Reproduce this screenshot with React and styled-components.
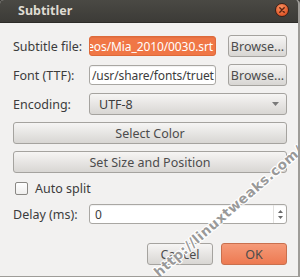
import React from 'react'
import styled, { createGlobalStyle } from 'styled-components';

const GlobalStyle = createGlobalStyle`
html, body {
    margin: 0;
    padding: 0;
    background: #3c3b37;
}
body {
    font-family: "Noto Sans", "DejaVu Sans", sans-serif;
    font-size: 12.5px;
    color: #3c3c3c;
}
`;

function App() {
    return (
        <>
            <GlobalStyle />
            <Window>
                <TitleBar>
                    <Title>Subtitler</Title>
                    <CloseButton>
                        <svg width="6" height="6" viewBox="0 0 6 6">
                            <path d="M0.8 0.8 L5.2 5.2 M5.2 0.8 L0.8 5.2" stroke="#5a2312" strokeWidth="1.4" strokeLinecap="round"/>
                        </svg>
                    </CloseButton>
                </TitleBar>
                <Body>
                    <Row>
                        <Label>Subtitle file:</Label>
                        <TextField selected>eos/Mia_2010/0030.srt</TextField>
                        <Button width="59px">Browse...</Button>
                    </Row>
                    <Row>
                        <Label>Font (TTF):</Label>
                        <TextField>/usr/share/fonts/truet</TextField>
                        <Button width="59px">Browse...</Button>
                    </Row>
                    <Row>
                        <Label>Encoding:</Label>
                        <Combo>
                            <span>UTF-8</span>
                            <svg width="7" height="4" viewBox="0 0 7 4">
                                <path d="M0 0 L7 0 L3.5 4 Z" fill="#7a7a7a"/>
                            </svg>
                        </Combo>
                    </Row>
                    <WideButton>Select Color</WideButton>
                    <WideButton>Set Size and Position</WideButton>
                    <CheckRow>
                        <CheckBox />
                        <span>Auto split</span>
                    </CheckRow>
                    <Row>
                        <Label>Delay (ms):</Label>
                        <SpinField>
                            <SpinText>0</SpinText>
                            <SpinArrows>
                                <svg width="5" height="3" viewBox="0 0 5 3">
                                    <path d="M0 3 L5 3 L2.5 0 Z" fill="#6a6a6a"/>
                                </svg>
                                <svg width="5" height="3" viewBox="0 0 5 3">
                                    <path d="M0 0 L5 0 L2.5 3 Z" fill="#6a6a6a"/>
                                </svg>
                            </SpinArrows>
                        </SpinField>
                    </Row>
                    <ButtonBar>
                        <Button width="66px">Cancel</Button>
                        <Button width="66px" primary>OK</Button>
                    </ButtonBar>
                </Body>
                <Watermark>
                    <span>http://linuxtweaks.com/</span>
                </Watermark>
            </Window>
        </>
    )
}

export default App


const Window = styled.div`
position: relative;
width: 300px;
height: 277px;
box-sizing: border-box;
display: flex;
flex-direction: column;
overflow: hidden;
background: #f2f1f0;
border-right: 2px solid #9e9c98;
border-bottom: 1px solid #9e9c98;
border-radius: 4px 4px 0 0;
`;

const TitleBar = styled.div`
height: 23px;
flex-shrink: 0;
display: flex;
align-items: center;
justify-content: space-between;
padding: 0 9px 0 18px;
background: linear-gradient(#4a4944, #3c3b37);
border-bottom: 1px solid #2c2b28;
box-sizing: border-box;
`;

const Title = styled.div`
font-weight: bold;
font-size: 12.5px;
color: #dfdbd2;
margin-top: -1px;
`;

const CloseButton = styled.div`
width: 12px;
height: 12px;
margin-top: -2px;
border-radius: 50%;
background: radial-gradient(circle at 40% 30%, #f7905f, #e0582a 70%, #c4461f);
border: 1px solid #3a2018;
display: flex;
align-items: center;
justify-content: center;
`;

const Body = styled.div`
display: flex;
flex-direction: column;
gap: 7px;
padding: 12px 11px 0 13px;
`;

const Row = styled.div`
height: 22px;
display: flex;
align-items: center;
`;

const Label = styled.div`
width: 76px;
flex-shrink: 0;
white-space: nowrap;
`;

const TextField = styled.div`
width: 127px;
height: 20px;
box-sizing: border-box;
margin-right: 12px;
padding: 0 2px;
display: flex;
align-items: center;
justify-content: ${p => p.selected ? 'flex-end' : 'flex-start'};
white-space: nowrap;
overflow: hidden;
border-radius: 3px;
border: 1px solid ${p => p.selected ? '#de6a3a' : '#a9a7a3'};
background: ${p => p.selected ? '#f07746' : '#ffffff'};
color: ${p => p.selected ? '#ffffff' : '#3c3c3c'};
font-size: 12px;
letter-spacing: -0.1px;
box-shadow: inset 0 1px 1px rgba(0,0,0,0.06);
`;

const Button = styled.div`
width: ${p => p.width};
height: 22px;
box-sizing: border-box;
display: flex;
align-items: center;
justify-content: center;
border-radius: 3px;
border: 1px solid ${p => p.primary ? '#c9704e' : '#a5a39f'};
background: ${p => p.primary
    ? 'linear-gradient(#f59a78, #ed7a52)'
    : 'linear-gradient(#f6f5f4, #d8d6d3)'};
color: #4c4c4c;
white-space: nowrap;
`;

const WideButton = styled(Button)`
width: 100%;
`;

const Combo = styled(Button)`
flex: 1;
justify-content: space-between;
padding: 0 7px 0 9px;
color: #3c3c3c;
`;

const CheckRow = styled.div`
height: 16px;
display: flex;
align-items: center;
gap: 7px;
padding-left: 2px;
`;

const CheckBox = styled.div`
width: 11px;
height: 11px;
border: 1px solid #8a8884;
border-radius: 2px;
background: linear-gradient(#ffffff, #efeeed);
`;

const SpinField = styled.div`
flex: 1;
height: 20px;
box-sizing: border-box;
display: flex;
border: 1px solid #a9a7a3;
border-radius: 3px;
background: #ffffff;
box-shadow: inset 0 1px 1px rgba(0,0,0,0.06);
`;

const SpinText = styled.div`
flex: 1;
display: flex;
align-items: center;
padding-left: 5px;
font-size: 12px;
`;

const SpinArrows = styled.div`
width: 12px;
display: flex;
flex-direction: column;
align-items: center;
justify-content: center;
gap: 3px;
border-left: 1px solid #e2e1df;
`;

const ButtonBar = styled.div`
display: flex;
justify-content: flex-end;
gap: 8px;
margin-top: 11px;
`;

const Watermark = styled.div`
position: absolute;
left: 228px;
top: 211px;
width: 0;
height: 0;
pointer-events: none;

span {
    position: absolute;
    left: 0;
    top: 0;
    transform: translate(-50%, -50%) rotate(-41deg);
    white-space: nowrap;
    font-family: "DejaVu Sans", sans-serif;
    font-weight: bold;
    font-size: 13.5px;
    letter-spacing: 0.5px;
    color: rgba(120, 120, 120, 0.75);
    text-shadow: 1px 1px 0 #ffffff, -1px -1px 0 #ffffff, 1px -1px 0 #ffffff, -1px 1px 0 #ffffff;
}
`;
